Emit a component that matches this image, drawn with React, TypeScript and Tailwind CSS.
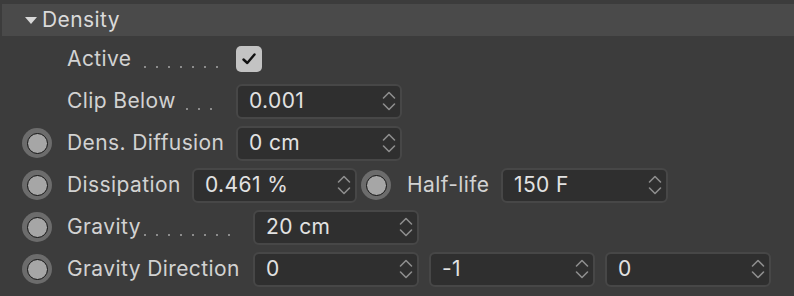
import React from "react";

const Spinner = () => (
  <svg width="14" height="24" viewBox="0 0 14 24" className="shrink-0">
    <path d="M1.5 9 L7 3.5 L12.5 9" fill="none" stroke="#8e8e8e" strokeWidth="1.6" strokeLinecap="round" strokeLinejoin="round" />
    <path d="M1.5 15 L7 20.5 L12.5 15" fill="none" stroke="#8e8e8e" strokeWidth="1.6" strokeLinecap="round" strokeLinejoin="round" />
  </svg>
);

const Field = ({ value, width = "w-[166px]" }: { value: string; width?: string }) => (
  <div
    className={`${width} h-[35px] shrink-0 flex items-center justify-between pl-[11px] pr-[4px] rounded-[6px] border-2 border-[#474747] bg-[#2f2f2f] text-[#e2e2e2]`}
  >
    <span>{value}</span>
    <Spinner />
  </div>
);

const Radio = () => (
  <div className="w-[30px] h-[30px] shrink-0 rounded-full bg-[#6c6c6c] flex items-center justify-center">
    <div className="w-[21px] h-[21px] rounded-full bg-[#a6a6a6] border-[1.5px] border-[#141414]" />
  </div>
);

const Dots = ({ count }: { count: number }) => (
  <span className="flex gap-[10px] self-end mb-[12px]">
    {Array.from({ length: count }).map((_, i) => (
      <span key={i} className="w-[2px] h-[2px] bg-[#8c8c8c]" />
    ))}
  </span>
);

const Row = ({ radio = false, children }: { radio?: boolean; children: React.ReactNode }) => (
  <div className="h-[42px] flex items-center">
    <div className="w-[67px] shrink-0 flex pl-[22px]">{radio && <Radio />}</div>
    {children}
  </div>
);

export default function App() {
  return (
    <div
      className="w-[794px] h-[296px] bg-[#3c3c3c] text-[21px] tracking-[0.4px] text-[#d2d2d2] overflow-hidden"
      style={{ fontFamily: "Inter, 'Noto Sans', sans-serif" }}
    >
      <div className="pt-[4px] pl-[2px]">
        <div className="h-[32px] bg-[#4a4a4a] flex items-center pl-[23px] text-[#dadada]">
          <svg width="12" height="8" viewBox="0 0 12 8" className="mr-[5px] mt-[1px]">
            <path d="M0 0 H12 L6 7 Z" fill="#d8d8d8" />
          </svg>
          <span>Density</span>
        </div>
      </div>

      <div className="pt-[2px]">
        <Row>
          <div className="w-[169px] shrink-0 flex items-center h-full gap-[13px]">
            <span>Active</span>
            <Dots count={7} />
          </div>
          <div className="w-[26px] h-[26px] rounded-[5px] bg-[#c3c3c3] flex items-center justify-center">
            <svg width="18" height="18" viewBox="0 0 18 18">
              <path d="M3.5 9.5 L7.3 13 L14.5 4.5" fill="none" stroke="#111" strokeWidth="2.4" strokeLinecap="round" strokeLinejoin="round" />
            </svg>
          </div>
        </Row>

        <Row>
          <div className="w-[169px] shrink-0 flex items-center h-full gap-[10px]">
            <span>Clip Below</span>
            <Dots count={3} />
          </div>
          <Field value="0.001" />
        </Row>

        <Row radio>
          <div className="w-[169px] shrink-0">Dens. Diffusion</div>
          <Field value="0 cm" />
        </Row>

        <Row radio>
          <div className="w-[125px] shrink-0">Dissipation</div>
          <Field value="0.461 %" width="w-[165px]" />
          <div className="ml-[4px] mr-[16px]">
            <Radio />
          </div>
          <div className="w-[94px] shrink-0">Half-life</div>
          <Field value="150 F" width="w-[167px]" />
        </Row>

        <Row radio>
          <div className="w-[186px] shrink-0 flex items-center h-full gap-[3px]">
            <span>Gravity</span>
            <Dots count={8} />
          </div>
          <Field value="20 cm" />
        </Row>

        <Row radio>
          <div className="w-[186px] shrink-0">Gravity Direction</div>
          <div className="flex gap-[10px]">
            <Field value="0" />
            <Field value="-1" />
            <Field value="0" />
          </div>
        </Row>
      </div>
    </div>
  );
}
